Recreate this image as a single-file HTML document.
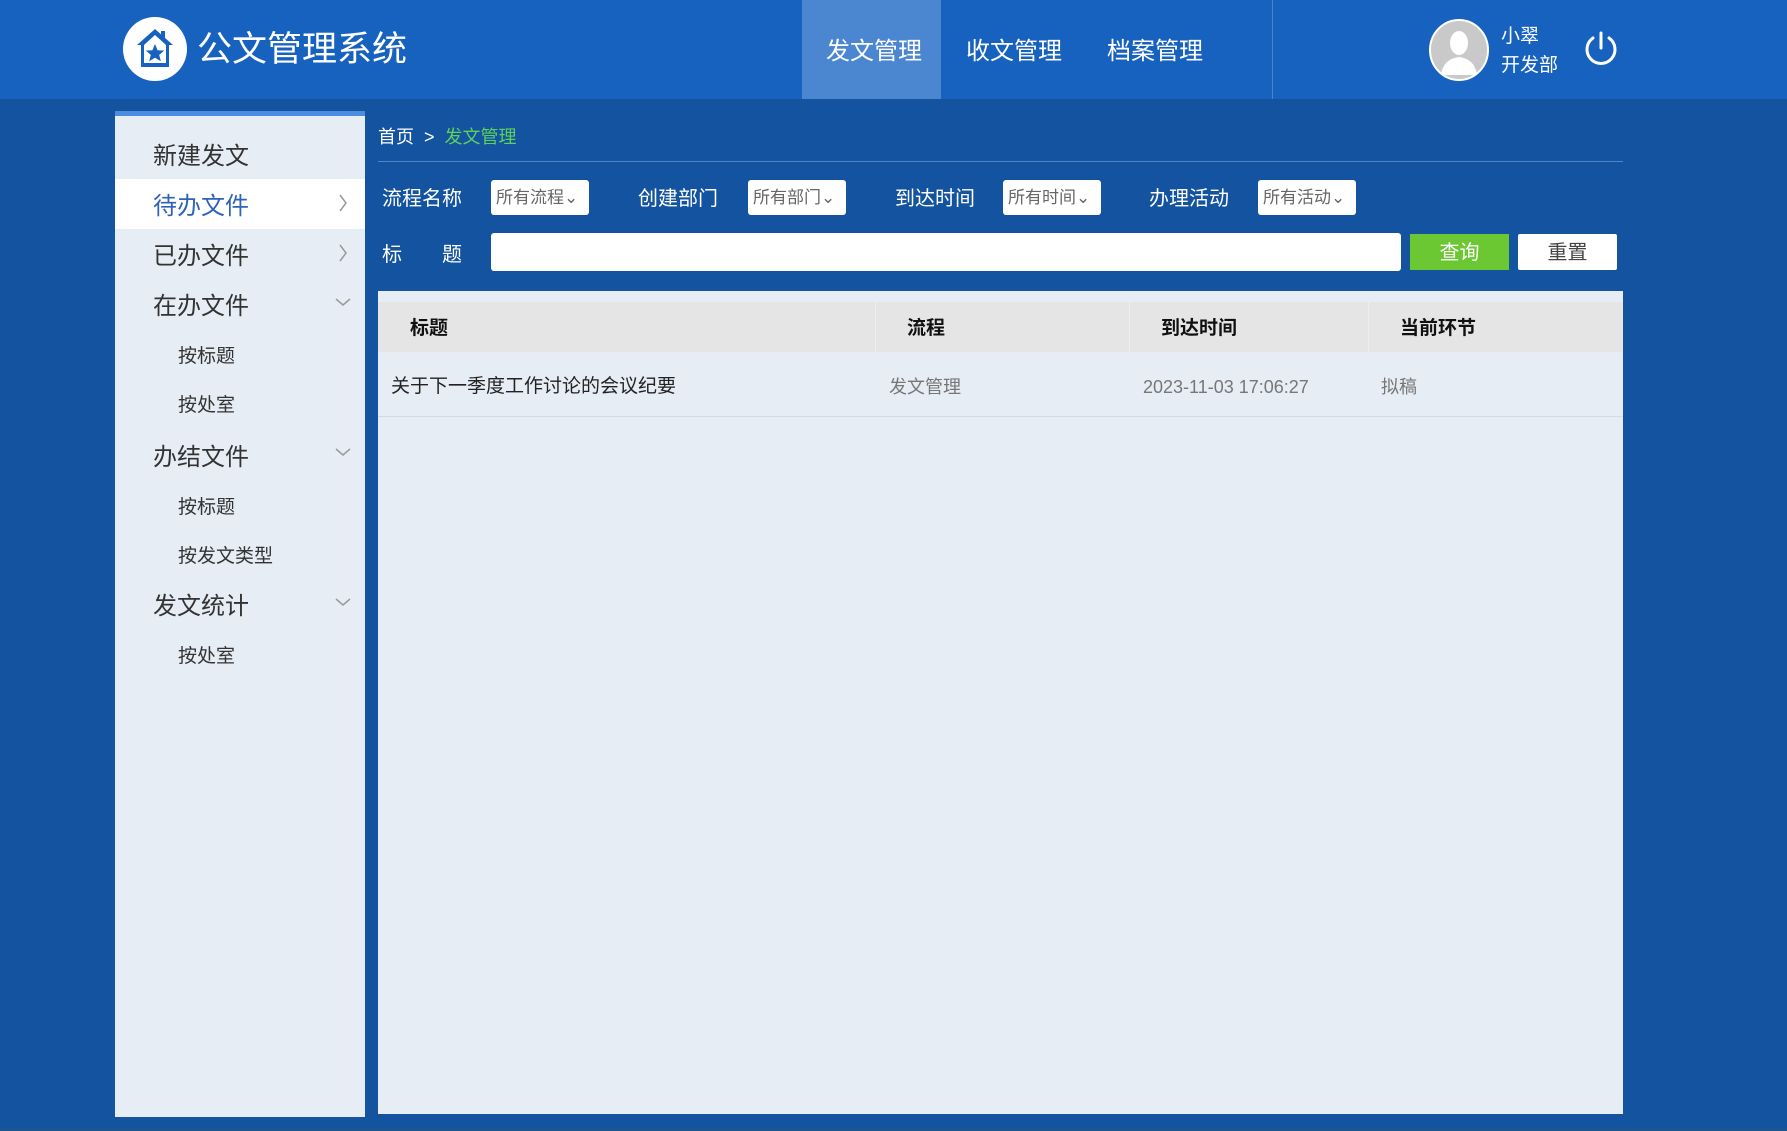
<!DOCTYPE html>
<html><head><meta charset="utf-8"><style>
*{margin:0;padding:0;box-sizing:border-box}
body{width:1787px;height:1131px;background:#13539f;font-family:"Liberation Sans","Noto Sans CJK SC",sans-serif;position:relative;overflow:hidden}
.a{position:absolute;white-space:nowrap}
.hdr{left:0;top:0;width:1787px;height:99px;background:#1862bf}
.nav{top:0;height:99px;line-height:99px;color:#fff;font-size:24px}
.side{left:115px;top:111px;width:250px;height:1006px;background:#e6edf5;border-top:5px solid #4c8de2}
.si{left:153px;font-size:24px;color:#333;line-height:30px}
.ss{left:178px;font-size:19px;color:#333;line-height:26px}
.lbl{color:#fff;font-size:20px;line-height:26px}
.sel{background:#fff;border-radius:3px;height:35px;top:180px;width:98px;font-size:17px;color:#666;line-height:35px;padding-left:5px}
.th{top:304px;font-size:19px;font-weight:bold;color:#111;line-height:50px}
.td{top:374px;font-size:18px;line-height:26px;color:#777}
</style></head><body>
<div class="a hdr"></div>
<svg class="a" style="left:123px;top:17px" width="64" height="64" viewBox="0 0 64 64"><circle cx="32" cy="32" r="32" fill="#fff"/><path d="M32 12 L14 28 L18 28 L18 50 L46 50 L46 28 L50 28 Z" fill="#1862bf"/><path d="M32 18 L21 28 L21 46 L43 46 L43 28 Z" fill="#fff"/><path d="M32 27 l2.6 6.2 6.6.4-5 4.3 1.6 6.4L32 40.8l-5.8 3.5 1.6-6.4-5-4.3 6.6-.4z" fill="#1862bf"/><rect x="38" y="14" width="4" height="8" fill="#1862bf"/></svg>
<div class="a" style="left:197px;top:28px;font-size:35px;color:#fff;line-height:44px">公文管理系统</div>
<div class="a" style="left:802px;top:0;width:139px;height:99px;background:#4b86d1"></div>
<div class="a nav" style="left:826px;top:2px">发文管理</div>
<div class="a nav" style="left:966px;top:2px">收文管理</div>
<div class="a nav" style="left:1107px;top:2px">档案管理</div>
<div class="a" style="left:1272px;top:0;width:1px;height:99px;background:#4b83cc"></div>
<svg class="a" style="left:1429px;top:19px" width="60" height="62" viewBox="0 0 60 62"><ellipse cx="30" cy="31" rx="29" ry="30" fill="#c9c9c9" stroke="#fff" stroke-width="2"/><ellipse cx="30" cy="24" rx="9" ry="12" fill="#fff"/><path d="M12 56 Q14 40 30 38 Q46 40 48 56 Z" fill="#fff"/></svg>
<div class="a" style="left:1501px;top:25px;font-size:19px;color:#fff;line-height:24px">小翠</div>
<div class="a" style="left:1501px;top:54px;font-size:19px;color:#fff;line-height:24px">开发部</div>
<svg class="a" style="left:1582px;top:29px" width="38" height="40" viewBox="0 0 38 40"><path d="M11 9 A14 14 0 1 0 27 9" fill="none" stroke="#fff" stroke-width="3" stroke-linecap="round"/><line x1="19" y1="4" x2="19" y2="19" stroke="#fff" stroke-width="3" stroke-linecap="round"/></svg>

<div class="a side"></div>
<div class="a" style="left:115px;top:179px;width:250px;height:50px;background:#fff"></div>
<div class="a si" style="top:142px">新建发文</div>
<div class="a si" style="top:192px;color:#2d63b8">待办文件</div>
<svg class="a" style="left:338px;top:194px" width="10" height="18"><path d="M2 1 L8 9 L2 17" fill="none" stroke="#999" stroke-width="1.5"/></svg>
<div class="a si" style="top:242px">已办文件</div>
<svg class="a" style="left:338px;top:244px" width="10" height="18"><path d="M2 1 L8 9 L2 17" fill="none" stroke="#999" stroke-width="1.5"/></svg>
<div class="a si" style="top:292px">在办文件</div>
<svg class="a" style="left:335px;top:297px" width="16" height="10"><path d="M1 2 L8 8 L15 2" fill="none" stroke="#999" stroke-width="1.5"/></svg>
<div class="a ss" style="top:344px">按标题</div>
<div class="a ss" style="top:393px">按处室</div>
<div class="a si" style="top:443px">办结文件</div>
<svg class="a" style="left:335px;top:447px" width="16" height="10"><path d="M1 2 L8 8 L15 2" fill="none" stroke="#999" stroke-width="1.5"/></svg>
<div class="a ss" style="top:495px">按标题</div>
<div class="a ss" style="top:544px">按发文类型</div>
<div class="a si" style="top:592px">发文统计</div>
<svg class="a" style="left:335px;top:597px" width="16" height="10"><path d="M1 2 L8 8 L15 2" fill="none" stroke="#999" stroke-width="1.5"/></svg>
<div class="a ss" style="top:644px">按处室</div>

<div class="a" style="left:378px;top:125px;font-size:18px;color:#fff;line-height:24px">首页 &nbsp;&gt;&nbsp; <span style="color:#5fd05a">发文管理</span></div>
<div class="a" style="left:378px;top:161px;width:1245px;height:1px;background:#4f86c8"></div>
<div class="a lbl" style="left:382px;top:186px">流程名称</div>
<div class="a sel" style="left:491px">所有流程⌄</div>
<div class="a lbl" style="left:638px;top:186px">创建部门</div>
<div class="a sel" style="left:748px">所有部门⌄</div>
<div class="a lbl" style="left:895px;top:186px">到达时间</div>
<div class="a sel" style="left:1003px">所有时间⌄</div>
<div class="a lbl" style="left:1149px;top:186px">办理活动</div>
<div class="a sel" style="left:1258px">所有活动⌄</div>
<div class="a lbl" style="left:382px;top:242px">标</div>
<div class="a lbl" style="left:442px;top:242px">题</div>
<div class="a" style="left:491px;top:233px;width:910px;height:38px;background:#fff;border-radius:3px"></div>
<div class="a" style="left:1410px;top:234px;width:99px;height:36px;background:#6cc832;color:#fff;font-size:20px;text-align:center;line-height:38px">查询</div>
<div class="a" style="left:1518px;top:234px;width:99px;height:36px;background:#fff;color:#444;font-size:20px;text-align:center;line-height:38px;border-radius:2px">重置</div>

<div class="a" style="left:378px;top:291px;width:1245px;height:823px;background:#e6edf5"></div>
<div class="a" style="left:378px;top:302px;width:1245px;height:50px;background:#e5e5e5"></div>
<div class="a" style="left:875px;top:302px;width:1px;height:50px;background:#eee"></div>
<div class="a" style="left:1129px;top:302px;width:1px;height:50px;background:#eee"></div>
<div class="a" style="left:1368px;top:302px;width:1px;height:50px;background:#eee"></div>
<div class="a th" style="left:410px">标题</div>
<div class="a th" style="left:907px">流程</div>
<div class="a th" style="left:1161px">到达时间</div>
<div class="a th" style="left:1400px">当前环节</div>
<div class="a td" style="left:391px;color:#222;font-size:19px">关于下一季度工作讨论的会议纪要</div>
<div class="a td" style="left:889px">发文管理</div>
<div class="a td" style="left:1143px">2023-11-03 17:06:27</div>
<div class="a td" style="left:1381px">拟稿</div>
<div class="a" style="left:378px;top:416px;width:1245px;height:1px;background:#d4dbe4"></div>
<div class="a" style="left:0;top:1128px;width:1787px;height:3px;background:#1d5590"></div>
</body></html>
